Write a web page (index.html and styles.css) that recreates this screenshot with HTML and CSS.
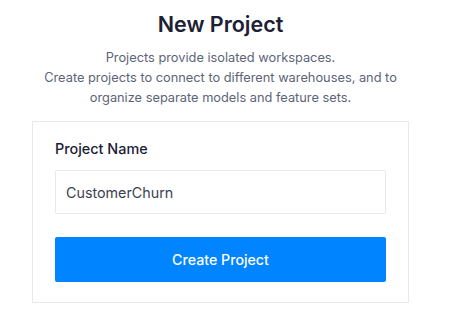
FILE: index.html
```html
<!DOCTYPE html>
<html lang="en">
<head>
    <meta charset="UTF-8">
    <meta name="viewport" content="width=device-width, initial-scale=1.0">
    <title>New Project</title>
    <link rel="stylesheet" href="styles.css">
</head>
<body>
    <div class="page">
        <h1>New Project</h1>

        <div class="description">
            <p>Projects provide isolated workspaces.</p>
            <p>Create projects to connect to different warehouses, and to organize separate models and feature sets.</p>
        </div>

        <div class="form-container">
            <form id="projectForm">
                <label for="name">Project Name</label>
                <input type="text" id="name" name="name" value="CustomerChurn">

                <button type="submit">Create Project</button>
            </form>
        </div>
    </div>
</body>
</html>
```

FILE: styles.css
```css
body {
    font-family: Inter, "Noto Sans", sans-serif;
    margin: 0;
    background-color: #fff;
}
.page {
    width: 377px;
    margin-left: 32px;
    padding-top: 9px;
}
h1 {
    color: #1c2035;
    text-align: center;
    font-size: 21.5px;
    font-weight: 600;
    line-height: 30px;
    margin: 0 0 9px;
}
.description {
    text-align: center;
    color: #5c6478;
    font-size: 12.8px;
    line-height: 20px;
    margin-bottom: 13px;
}
.description p {
    margin: 0;
    padding: 0 10px;
}
.form-container {
    border: 1px solid #e9e9ec;
    padding: 17px 22px 20px;
}
label {
    display: block;
    font-size: 14.4px;
    font-weight: 500;
    color: #1c2035;
    line-height: 20px;
    margin-bottom: 11px;
}
input {
    display: block;
    box-sizing: border-box;
    width: 100%;
    height: 44px;
    padding: 0 10px;
    border: 1px solid #e9e9ec;
    border-radius: 2px;
    font-family: inherit;
    font-size: 14.3px;
    color: #3a3f52;
    margin-bottom: 23px;
}
button {
    display: block;
    width: 100%;
    height: 45px;
    background-color: #0084ff;
    color: #fff;
    border: none;
    border-radius: 2px;
    font-family: inherit;
    font-size: 14.2px;
    font-weight: 500;
    cursor: pointer;
}
```
